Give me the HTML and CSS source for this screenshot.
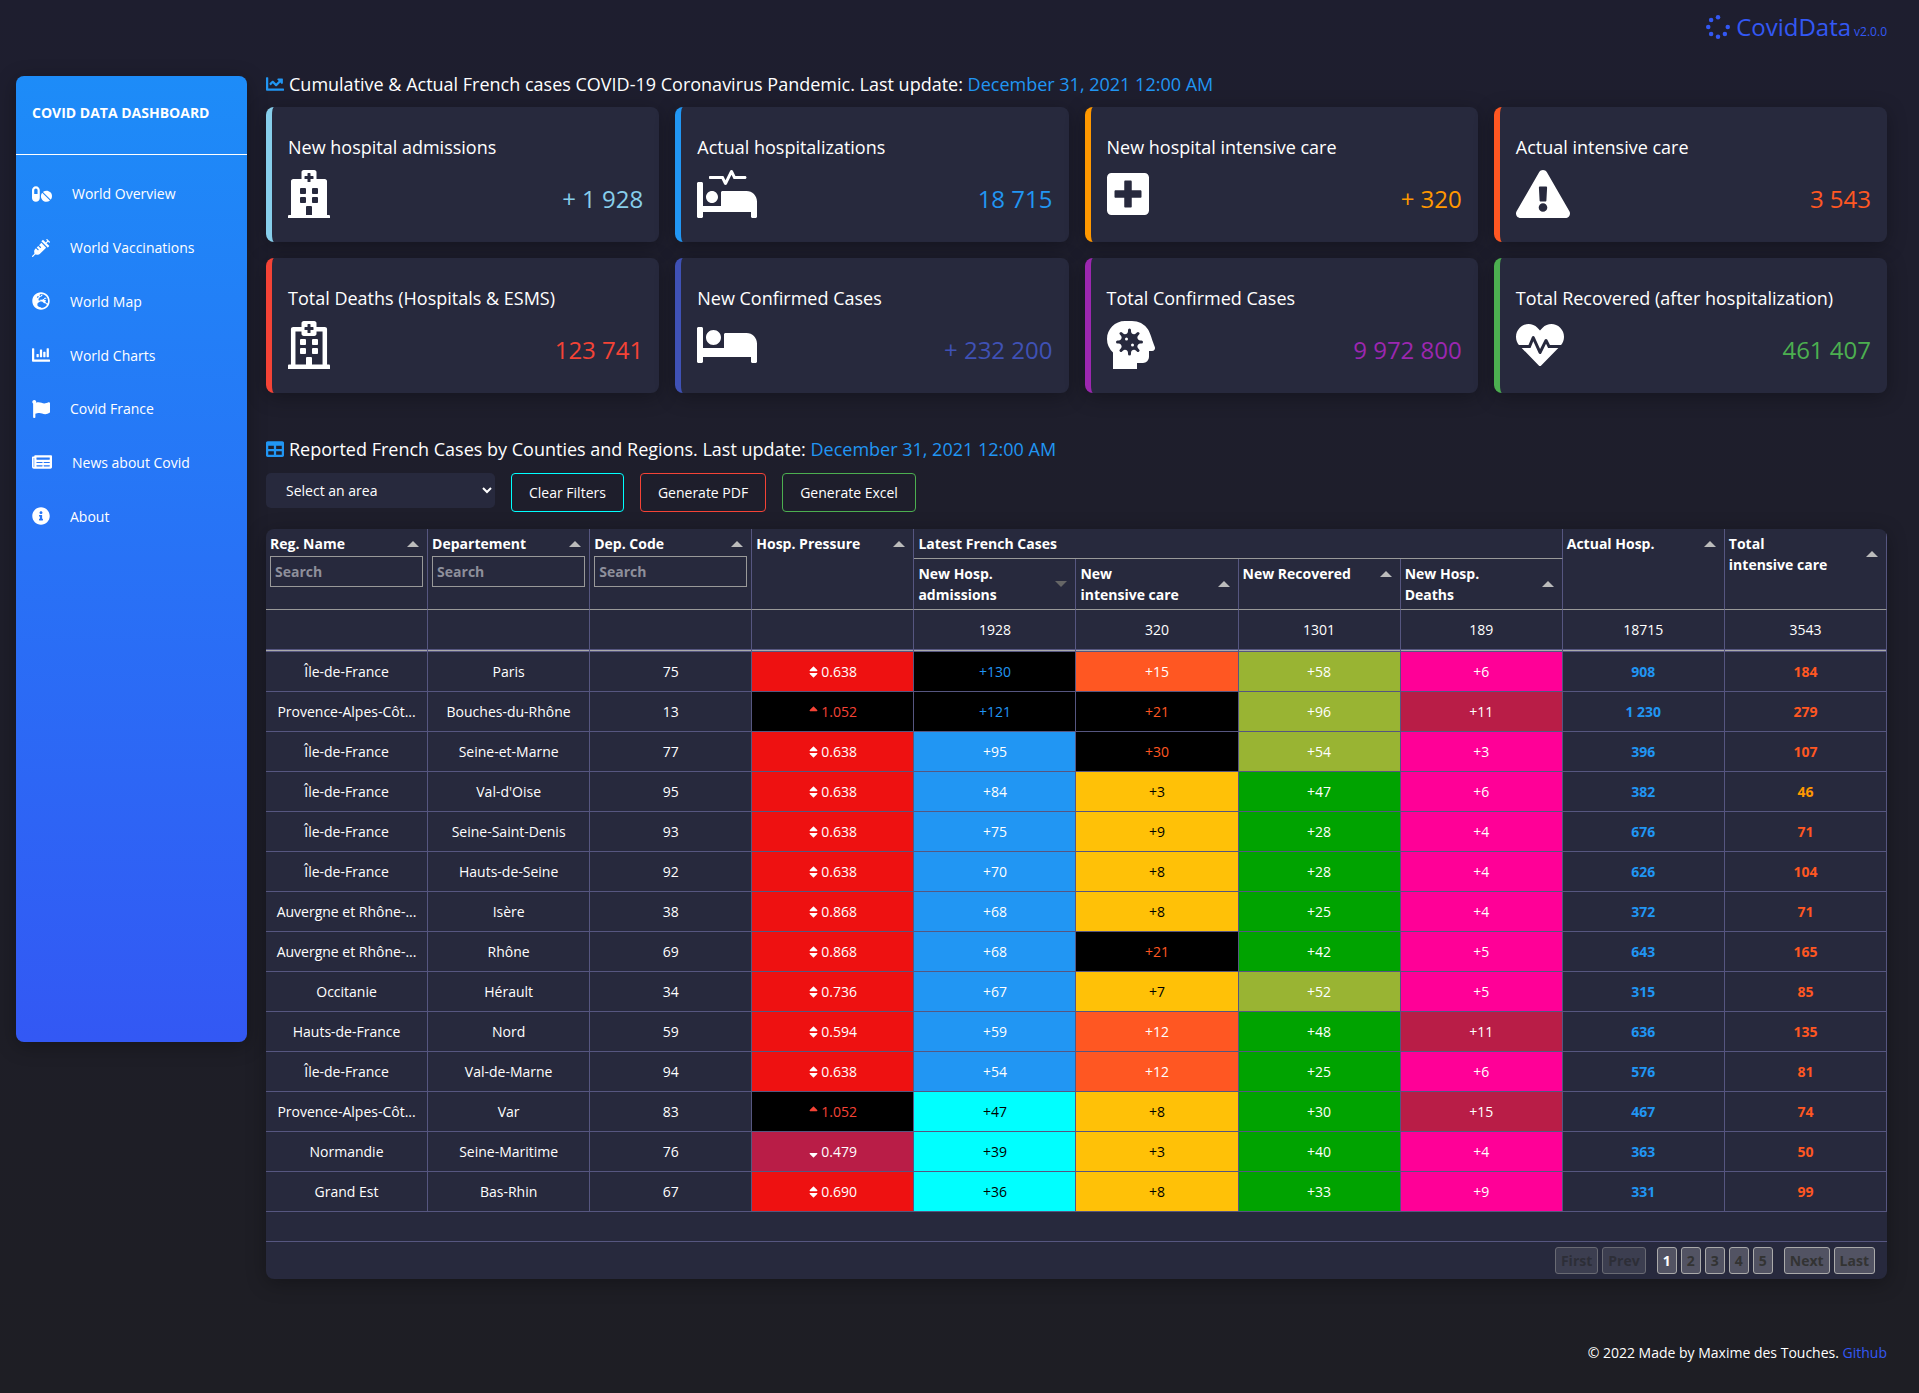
FILE: index.html
```html
<!DOCTYPE html>
<html lang="en">
<head>
<meta charset="utf-8">
<title>CovidData</title>
<meta name="viewport" content="width=device-width, initial-scale=1">
<link rel="stylesheet" href="styles.css">
</head>
<body>
<svg class="sprite" aria-hidden="true">
  <symbol id="sort" viewBox="0 0 320 512"><path d="M41 288h238c21.4 0 32.1 25.9 17 41L177 448c-9.4 9.4-24.6 9.4-33.9 0L24 329c-15.1-15.1-4.4-41 17-41zm255-105L177 64c-9.4-9.4-24.6-9.4-33.9 0L24 183c-15.1 15.1-4.4 41 17 41h238c21.4 0 32.1-25.9 17-41z"/></symbol>
  <symbol id="sort-up" viewBox="0 0 320 512"><path d="M279 224H41c-21.4 0-32.1-25.9-17-41L143 64c9.4-9.4 24.6-9.4 33.9 0l119 119c15.2 15.1 4.5 41-16.9 41z"/></symbol>
  <symbol id="sort-down" viewBox="0 0 320 512"><path d="M41 288h238c21.4 0 32.1 25.9 17 41L177 448c-9.4 9.4-24.6 9.4-33.9 0L24 329c-15.1-15.1-4.4-41 17-41z"/></symbol>
</svg>

<header class="topbar">
  <a class="brand" href="#">
    <svg class="brand-icon" viewBox="0 0 512 512"><circle cx="256" cy="48" r="48"/><circle cx="109" cy="109" r="48"/><circle cx="48" cy="256" r="48"/><circle cx="109" cy="403" r="48"/><circle cx="256" cy="464" r="48"/><circle cx="403" cy="403" r="48"/><circle cx="464" cy="256" r="48"/></svg>
    <span class="brand-name">CovidData</span>
    <span class="brand-version">v2.0.0</span>
  </a>
</header>

<div class="layout">
  <aside class="sidebar">
    <div class="sidebar-title">COVID DATA DASHBOARD</div>
    <nav class="nav">
      <a href="#"><svg class="nav-icon wide" viewBox="0 0 576 512"><path d="M112 32C50.1 32 0 82.1 0 144v224c0 61.9 50.1 112 112 112s112-50.1 112-112V144c0-61.9-50.1-112-112-112zm48 224H64V144c0-26.5 21.5-48 48-48s48 21.5 48 48v112zm139.700-29.700c-3.500-3.500-9.400-3.100-12.300.8-45.300 62.500-40.400 150.100 15.900 206.400 56.300 56.300 143.900 61.200 206.400 15.900 4-2.900 4.300-8.800.8-12.300L299.700 226.300zm229.800-19c-56.300-56.300-143.900-61.200-206.400-15.900-4 2.900-4.300 8.800-.8 12.300l210.800 210.800c3.500 3.500 9.400 3.100 12.300-.8 45.300-62.600 40.500-150.100-15.900-206.400z"/></svg>World Overview</a>
      <a href="#"><svg class="nav-icon" viewBox="0 0 512 512"><path d="M201.500 174.800l55.700 55.800c3.100 3.100 3.100 8.200 0 11.300l-11.300 11.300c-3.100 3.100-8.200 3.100-11.300 0l-55.700-55.800-45.300 45.300 55.800 55.800c3.100 3.100 3.100 8.200 0 11.300l-11.300 11.300c-3.100 3.100-8.200 3.100-11.300 0L111 265.200l-26.400 26.400c-17.300 17.300-25.600 41.100-23 65.400l7.100 63.600L2.300 487c-3.100 3.100-3.100 8.200 0 11.300l11.300 11.300c3.100 3.100 8.200 3.100 11.300 0l66.300-66.300 63.600 7.100c23.900 2.600 47.900-5.400 65.400-23l181.900-181.900-135.700-135.700-64.900 65zm308.200-93.300L430.500 2.300c-3.100-3.100-8.200-3.100-11.300 0l-11.300 11.300c-3.100 3.100-3.100 8.200 0 11.300l28.300 28.300-45.300 45.300-56.600-56.600-17-17c-3.100-3.100-8.200-3.100-11.300 0l-33.900 33.900c-3.100 3.100-3.100 8.200 0 11.300l17 17L424.800 223l17 17c3.100 3.100 8.200 3.100 11.300 0l33.900-34c3.100-3.100 3.100-8.200 0-11.300l-73.500-73.500 45.300-45.300 28.300 28.300c3.100 3.100 8.200 3.100 11.300 0l11.300-11.300c3.100-3.200 3.100-8.200 0-11.400z"/></svg>World Vaccinations</a>
      <a href="#"><svg class="nav-icon" viewBox="0 0 496 512"><path d="M248 8C111 8 0 119 0 256s111 248 248 248 248-111 248-248S385 8 248 8zm200 248c0 22.500-3.900 44.200-10.800 64.400h-20.300c-4.300 0-8.400-1.700-11.400-4.800l-32-32.600c-4.500-4.600-4.500-12.100.1-16.700l12.500-12.500v-8.700c0-3-1.200-5.900-3.300-8l-9.400-9.400c-2.100-2.100-5-3.300-8-3.300h-16c-6.200 0-11.300-5.100-11.300-11.300 0-3 1.200-5.900 3.300-8l9.400-9.400c2.100-2.100 5-3.300 8-3.300h32c6.200 0 11.300-5.100 11.300-11.300v-9.400c0-6.200-5.100-11.300-11.300-11.300h-36.700c-8.800 0-16 7.200-16 16v4.500c0 6.900-4.400 13-10.900 15.200l-31.600 10.500c-3.300 1.100-5.500 4.100-5.500 7.600v2.200c0 4.400-3.600 8-8 8h-16c-4.400 0-8-3.600-8-8s-3.600-8-8-8H247c-3 0-5.800 1.700-7.100 4.400l-9.400 18.700c-2.700 5.400-8.200 8.800-14.300 8.800H194c-8.800 0-16-7.200-16-16V199c0-4.200 1.700-8.300 4.700-11.300l20.100-20.100c4.600-4.600 7.200-10.900 7.200-17.500 0-3.400 2.200-6.500 5.500-7.600l40-13.300c1.700-.6 3.200-1.500 4.400-2.700l26.800-26.800c2.100-2.100 3.300-5 3.300-8 0-6.200-5.100-11.300-11.300-11.300H258l-16 16v8c0 4.400-3.600 8-8 8h-16c-4.400 0-8-3.600-8-8v-20c0-2.500 1.200-4.900 3.200-6.400l28.900-21.700c1.900-.1 3.800-.3 5.700-.3C358.300 56 448 145.700 448 256zM130.100 149.100c0-3 1.200-5.900 3.300-8l25.400-25.400c2.100-2.100 5-3.300 8-3.300 6.200 0 11.300 5.100 11.300 11.300v16c0 3-1.200 5.900-3.300 8l-9.400 9.400c-2.100 2.100-5 3.300-8 3.300h-16c-6.200 0-11.300-5.100-11.300-11.300zm128 306.400v-7.100c0-8.800-7.200-16-16-16h-20.200c-10.800 0-26.700-5.300-35.400-11.800l-22.200-16.700c-11.500-8.600-18.200-22.100-18.200-36.400v-23.900c0-16 8.400-30.800 22.100-39l42.900-25.700c7.100-4.200 15.200-6.500 23.400-6.500h31.200c10.900 0 21.400 3.900 29.600 10.900l43.200 37.100h18.300c8.500 0 16.600 3.400 22.600 9.400l17.300 17.300c3.400 3.400 8.100 5.300 12.900 5.300H423c-32.400 58.900-93.800 99.500-164.900 103.100z"/></svg>World Map</a>
      <a href="#"><svg class="nav-icon" viewBox="0 0 512 512"><path d="M332.800 320h38.400c6.400 0 12.800-6.400 12.800-12.800V172.800c0-6.400-6.400-12.800-12.800-12.800h-38.400c-6.400 0-12.800 6.400-12.800 12.800v134.400c0 6.400 6.400 12.800 12.800 12.800zm96 0h38.400c6.400 0 12.800-6.400 12.800-12.800V76.800c0-6.400-6.400-12.800-12.800-12.800h-38.400c-6.400 0-12.800 6.400-12.800 12.800v230.400c0 6.400 6.400 12.800 12.800 12.800zm-288 0h38.400c6.400 0 12.800-6.400 12.800-12.800v-70.400c0-6.400-6.400-12.800-12.800-12.800h-38.400c-6.400 0-12.800 6.400-12.800 12.800v70.400c0 6.400 6.400 12.800 12.800 12.800zm96 0h38.400c6.400 0 12.800-6.400 12.800-12.800V108.800c0-6.400-6.400-12.800-12.800-12.800h-38.400c-6.400 0-12.800 6.400-12.800 12.800v198.400c0 6.400 6.400 12.800 12.800 12.800zM496 384H64V80c0-8.840-7.160-16-16-16H16C7.160 64 0 71.160 0 80v336c0 17.670 14.330 32 32 32h464c8.840 0 16-7.160 16-16v-32c0-8.840-7.160-16-16-16z"/></svg>World Charts</a>
      <a href="#"><svg class="nav-icon" viewBox="0 0 512 512"><path d="M349.565 98.783C295.978 98.783 251.721 64 184.348 64c-24.955 0-47.309 4.384-68.045 12.013a55.947 55.947 0 0 0 3.586-23.562C118.117 24.015 94.806 1.206 66.338.048 34.345-1.254 8 24.296 8 56c0 19.026 9.497 35.825 24 45.945V488c0 13.255 10.745 24 24 24h16c13.255 0 24-10.745 24-24v-94.400c28.311-12.064 63.582-22.122 114.435-22.122 53.588 0 97.844 34.783 165.217 34.783 48.169 0 86.667-16.294 122.505-40.858C506.840 359.452 512 349.571 512 339.045v-243.100c0-23.393-24.269-38.870-45.485-29.016-34.338 15.948-76.454 31.854-116.950 31.854z"/></svg>Covid France</a>
      <a href="#"><svg class="nav-icon wide" viewBox="0 0 576 512"><path d="M552 64H88c-13.255 0-24 10.745-24 24v8H24c-13.255 0-24 10.745-24 24v272c0 30.928 25.072 56 56 56h472c26.510 0 48-21.490 48-48V88c0-13.255-10.745-24-24-24zM56 400a8 8 0 0 1-8-8V144h16v248a8 8 0 0 1-8 8zm236-16H140c-6.627 0-12-5.373-12-12v-8c0-6.627 5.373-12 12-12h152c6.627 0 12 5.373 12 12v8c0 6.627-5.373 12-12 12zm208 0H348c-6.627 0-12-5.373-12-12v-8c0-6.627 5.373-12 12-12h152c6.627 0 12 5.373 12 12v8c0 6.627-5.373 12-12 12zm-208-96H140c-6.627 0-12-5.373-12-12v-8c0-6.627 5.373-12 12-12h152c6.627 0 12 5.373 12 12v8c0 6.627-5.373 12-12 12zm208 0H348c-6.627 0-12-5.373-12-12v-8c0-6.627 5.373-12 12-12h152c6.627 0 12 5.373 12 12v8c0 6.627-5.373 12-12 12zm0-96H140c-6.627 0-12-5.373-12-12v-40c0-6.627 5.373-12 12-12h360c6.627 0 12 5.373 12 12v40c0 6.627-5.373 12-12 12z"/></svg>News about Covid</a>
      <a href="#"><svg class="nav-icon" viewBox="0 0 512 512"><path d="M256 8C119.043 8 8 119.083 8 256c0 136.997 111.043 248 248 248s248-111.003 248-248C504 119.083 392.957 8 256 8zm0 110c23.196 0 42 18.804 42 42s-18.804 42-42 42-42-18.804-42-42 18.804-42 42-42zm56 254c0 6.627-5.373 12-12 12h-88c-6.627 0-12-5.373-12-12v-24c0-6.627 5.373-12 12-12h12v-64h-12c-6.627 0-12-5.373-12-12v-24c0-6.627 5.373-12 12-12h64c6.627 0 12 5.373 12 12v100h12c6.627 0 12 5.373 12 12v24z"/></svg>About</a>
    </nav>
  </aside>

  <main class="content">
    <h2 class="heading">
      <svg class="heading-icon" viewBox="0 0 512 512"><path d="M496 384H64V80c0-8.840-7.160-16-16-16H16C7.160 64 0 71.160 0 80v336c0 17.670 14.330 32 32 32h464c8.840 0 16-7.160 16-16v-32c0-8.840-7.160-16-16-16zM464 96H345.940c-21.380 0-32.090 25.850-16.970 40.970l32.400 32.400L288 242.750l-73.370-73.370c-12.500-12.500-32.760-12.500-45.250 0l-68.690 68.690c-6.250 6.250-6.250 16.380 0 22.630l22.620 22.620c6.250 6.250 16.380 6.250 22.630 0L192 237.250l73.370 73.370c12.500 12.500 32.760 12.500 45.250 0l96-96 32.400 32.400c15.120 15.120 40.970 4.410 40.970-16.970V112c.01-8.840-7.150-16-15.990-16z"/></svg>
      <span>Cumulative &amp; Actual French cases COVID-19 Coronavirus Pandemic. Last update: <span class="date">December 31, 2021 12:00 AM</span></span>
    </h2>

    <section class="cards">
      <article class="card c-sky">
        <h3>New hospital admissions</h3>
        <div class="card-row">
          <svg viewBox="0 0 448 512"><path d="M448 492v20H0v-20c0-6.627 5.373-12 12-12h20V120c0-13.255 10.745-24 24-24h88V24c0-13.255 10.745-24 24-24h112c13.255 0 24 10.745 24 24v72h88c13.255 0 24 10.745 24 24v360h20c6.627 0 12 5.373 12 12zM308 192h-40c-6.627 0-12 5.373-12 12v40c0 6.627 5.373 12 12 12h40c6.627 0 12-5.373 12-12v-40c0-6.627-5.373-12-12-12zm-168 64h40c6.627 0 12-5.373 12-12v-40c0-6.627-5.373-12-12-12h-40c-6.627 0-12 5.373-12 12v40c0 6.627 5.373 12 12 12zm104 128h-40c-6.627 0-12 5.373-12 12v84h64v-84c0-6.627-5.373-12-12-12zm64-96h-40c-6.627 0-12 5.373-12 12v40c0 6.627 5.373 12 12 12h40c6.627 0 12-5.373 12-12v-40c0-6.627-5.373-12-12-12zm-116 12c0-6.627-5.373-12-12-12h-40c-6.627 0-12 5.373-12 12v40c0 6.627 5.373 12 12 12h40c6.627 0 12-5.373 12-12v-40zM182 96h26v26a6 6 0 0 0 6 6h20a6 6 0 0 0 6-6V96h26a6 6 0 0 0 6-6V70a6 6 0 0 0-6-6h-26V38a6 6 0 0 0-6-6h-20a6 6 0 0 0-6 6v26h-26a6 6 0 0 0-6 6v20a6 6 0 0 0 6 6z"/></svg>
          <span class="value">+ 1&nbsp;928</span>
        </div>
      </article>
      <article class="card c-blue">
        <h3>Actual hospitalizations</h3>
        <div class="card-row">
          <svg viewBox="0 0 640 512"><path d="M528 224H272c-8.800 0-16 7.200-16 16v144H64V144c0-8.800-7.200-16-16-16H16c-8.800 0-16 7.200-16 16v352c0 8.800 7.200 16 16 16h32c8.800 0 16-7.200 16-16v-48h512v48c0 8.800 7.200 16 16 16h32c8.800 0 16-7.200 16-16V336c0-61.900-50.100-112-112-112zM136 96h126.100l27.600 55.200c5.900 11.800 22.700 11.800 28.600 0L368 51.800 390.100 96H512c8.800 0 16-7.200 16-16s-7.200-16-16-16H409.900L382.300 8.800C376.400-3 359.600-3 353.700 8.800L304 108.200l-19.900-39.800c-1.400-2.700-4.100-4.400-7.200-4.400H136c-4.400 0-8 3.600-8 8v16c0 4.400 3.600 8 8 8zm24 256c35.300 0 64-28.700 64-64s-28.700-64-64-64-64 28.700-64 64 28.700 64 64 64z"/></svg>
          <span class="value">18&nbsp;715</span>
        </div>
      </article>
      <article class="card c-orange">
        <h3>New hospital intensive care</h3>
        <div class="card-row">
          <svg viewBox="0 0 448 512"><path d="M400 32H48C21.500 32 0 53.500 0 80v352c0 26.500 21.500 48 48 48h352c26.500 0 48-21.500 48-48V80c0-26.500-21.500-48-48-48zm-32 252c0 6.600-5.400 12-12 12h-92v92c0 6.600-5.400 12-12 12h-56c-6.600 0-12-5.400-12-12v-92H92c-6.600 0-12-5.400-12-12v-56c0-6.600 5.400-12 12-12h92v-92c0-6.600 5.400-12 12-12h56c6.600 0 12 5.400 12 12v92h92c6.600 0 12 5.400 12 12v56z"/></svg>
          <span class="value">+ 320</span>
        </div>
      </article>
      <article class="card c-deep">
        <h3>Actual intensive care</h3>
        <div class="card-row">
          <svg viewBox="0 0 576 512"><path d="M569.517 440.013C587.975 472.007 564.806 512 527.940 512H48.054c-36.937 0-59.999-40.055-41.577-71.987L246.423 23.985c18.467-32.009 64.720-31.951 83.154 0l239.940 416.028zM288 354c-25.405 0-46 20.595-46 46s20.595 46 46 46 46-20.595 46-46-20.595-46-46-46zm-43.673-165.346l7.418 136c.347 6.364 5.609 11.346 11.982 11.346h48.546c6.373 0 11.635-4.982 11.982-11.346l7.418-136c.375-6.874-5.098-12.654-11.982-12.654h-63.383c-6.884 0-12.356 5.780-11.981 12.654z"/></svg>
          <span class="value">3&nbsp;543</span>
        </div>
      </article>
      <article class="card c-red">
        <h3>Total Deaths (Hospitals &amp; ESMS)</h3>
        <div class="card-row">
          <svg viewBox="0 0 448 512"><path d="M128 244v-40c0-6.627 5.373-12 12-12h40c6.627 0 12 5.373 12 12v40c0 6.627-5.373 12-12 12h-40c-6.627 0-12-5.373-12-12zm140 12h40c6.627 0 12-5.373 12-12v-40c0-6.627-5.373-12-12-12h-40c-6.627 0-12 5.373-12 12v40c0 6.627 5.373 12 12 12zm-76 84v-40c0-6.627-5.373-12-12-12h-40c-6.627 0-12 5.373-12 12v40c0 6.627 5.373 12 12 12h40c6.627 0 12-5.373 12-12zm76 12h40c6.627 0 12-5.373 12-12v-40c0-6.627-5.373-12-12-12h-40c-6.627 0-12 5.373-12 12v40c0 6.627 5.373 12 12 12zm180 124v36H0v-36c0-6.627 5.373-12 12-12h19.500V85.035C31.500 73.418 42.245 64 55.500 64H144V24c0-13.255 10.745-24 24-24h112c13.255 0 24 10.745 24 24v40h88.500c13.255 0 24 9.418 24 21.035V464H436c6.627 0 12 5.373 12 12zM79.500 463H192v-67c0-6.627 5.373-12 12-12h40c6.627 0 12 5.373 12 12v67h112.500V112H304v24c0 13.255-10.745 24-24 24H168c-13.255 0-24-10.745-24-24v-24H79.500v351zM266 64h-26V38a6 6 0 0 0-6-6h-20a6 6 0 0 0-6 6v26h-26a6 6 0 0 0-6 6v20a6 6 0 0 0 6 6h26v26a6 6 0 0 0 6 6h20a6 6 0 0 0 6-6V96h26a6 6 0 0 0 6-6V70a6 6 0 0 0-6-6z"/></svg>
          <span class="value">123&nbsp;741</span>
        </div>
      </article>
      <article class="card c-indigo">
        <h3>New Confirmed Cases</h3>
        <div class="card-row">
          <svg viewBox="0 0 640 512"><path d="M176 256c44.110 0 80-35.890 80-80s-35.890-80-80-80-80 35.890-80 80 35.890 80 80 80zm352-128H304c-8.840 0-16 7.160-16 16v144H64V80c0-8.840-7.160-16-16-16H16C7.160 64 0 71.160 0 80v352c0 8.840 7.160 16 16 16h32c8.840 0 16-7.160 16-16v-48h512v48c0 8.840 7.160 16 16 16h32c8.840 0 16-7.160 16-16V240c0-61.860-50.140-112-112-112z"/></svg>
          <span class="value">+ 232&nbsp;200</span>
        </div>
      </article>
      <article class="card c-purple">
        <h3>Total Confirmed Cases</h3>
        <div class="card-row">
          <svg viewBox="0 0 512 512"><path fill-rule="evenodd" d="M509.220 275c-21-47.130-48.500-151.750-73.120-186.750A208.130 208.130 0 0 0 266.110 0H192C86 0 0 86 0 192a191.280 191.280 0 0 0 64 142.820V512h256v-64h64a64 64 0 0 0 64-64v-64h32a32 32 0 0 0 29.220-45zM368 208H355.880c-28.510 0-42.790-34.470-22.630-54.630l8.580-8.570a16 16 0 1 0-22.630-22.630l-8.570 8.580C290.470 150.910 256 136.630 256 108.120V96a16 16 0 0 0-32 0v12.120c0 28.510-34.470 42.790-54.630 22.630l-8.570-8.580a16 16 0 0 0-22.630 22.630l8.580 8.570c20.160 20.160 5.880 54.630-22.630 54.630H112a16 16 0 0 0 0 32h12.120c28.510 0 42.790 34.470 22.630 54.630l-8.580 8.570a16 16 0 1 0 22.630 22.630l8.570-8.580c20.160-20.160 54.630-5.880 54.630 22.630V352a16 16 0 0 0 32 0v-12.120c0-28.510 34.470-42.790 54.630-22.630l8.570 8.580a16 16 0 1 0 22.630-22.630l-8.580-8.570C313.090 274.470 327.370 240 355.880 240H368a16 16 0 0 0 0-32zM208 176a16 16 0 1 1 0 32 16 16 0 0 1 0-32zM272 240a16 16 0 1 1 0 32 16 16 0 0 1 0-32z"/></svg>
          <span class="value">9&nbsp;972&nbsp;800</span>
        </div>
      </article>
      <article class="card c-green">
        <h3>Total Recovered (after hospitalization)</h3>
        <div class="card-row">
          <svg viewBox="0 0 512 512"><path d="M320.200 243.800l-49.700 99.400c-6 12.100-23.400 11.700-28.900-.6l-56.900-126.300-30 71.700H60.600l182.500 186.500c7.100 7.300 18.600 7.300 25.700 0L451.400 288H342.300l-22.100-44.200zM473.700 73.900l-2.400-2.500c-51.500-52.600-135.800-52.600-187.400 0L256 100l-27.900-28.500c-51.500-52.700-135.900-52.700-187.400 0l-2.400 2.400C-10.400 123.700-12.500 203 31 256h102.400l35.900-86.200c5.400-12.900 23.600-13.100 29.400-.4l58.200 129.300 49-97.900c5.900-11.800 22.700-11.800 28.600 0l27.600 55.200H481c43.500-53 41.400-132.300-7.300-182.100z"/></svg>
          <span class="value">461&nbsp;407</span>
        </div>
      </article>
    </section>

    <h2 class="heading">
      <svg class="heading-icon" viewBox="0 0 512 512"><path d="M464 32H48C21.490 32 0 53.490 0 80v352c0 26.510 21.490 48 48 48h416c26.510 0 48-21.490 48-48V80c0-26.510-21.490-48-48-48zM224 416H64v-96h160v96zm0-160H64v-96h160v96zm224 160H288v-96h160v96zm0-160H288v-96h160v96z"/></svg>
      <span>Reported French Cases by Counties and Regions. Last update: <span class="date">December 31, 2021 12:00 AM</span></span>
    </h2>

    <div class="controls">
      <select aria-label="Area"><option>Select an area</option></select>
      <button class="btn btn-clear" type="button">Clear Filters</button>
      <button class="btn btn-pdf" type="button">Generate PDF</button>
      <button class="btn btn-excel" type="button">Generate Excel</button>
    </div>

    <section class="panel">
      <table>
        <thead>
          <tr>
            <th rowspan="2"><div class="th">Reg. Name<i class="up"></i></div><input type="search" placeholder="Search" aria-label="Search region name"></th>
            <th rowspan="2"><div class="th">Departement<i class="up"></i></div><input type="search" placeholder="Search" aria-label="Search departement"></th>
            <th rowspan="2"><div class="th">Dep. Code<i class="up"></i></div><input type="search" placeholder="Search" aria-label="Search departement code"></th>
            <th rowspan="2"><div class="th">Hosp. Pressure<i class="up"></i></div></th>
            <th colspan="4"><div class="th">Latest French Cases</div></th>
            <th rowspan="2"><div class="th">Actual Hosp.<i class="up"></i></div></th>
            <th rowspan="2"><div class="th"><span>Total<br>intensive care</span><i class="up"></i></div></th>
          </tr>
          <tr>
            <th><div class="th"><span>New Hosp.<br>admissions</span><i class="down"></i></div></th>
            <th><div class="th"><span>New<br>intensive care</span><i class="up"></i></div></th>
            <th><div class="th">New Recovered<i class="up"></i></div></th>
            <th><div class="th"><span>New Hosp.<br>Deaths</span><i class="up"></i></div></th>
          </tr>
          <tr class="totals"><td></td><td></td><td></td><td></td><td>1928</td><td>320</td><td>1301</td><td>189</td><td>18715</td><td>3543</td></tr>
        </thead>
        <tbody>
          <tr><td>Île-de-France</td><td>Paris</td><td>75</td><td class="red"><svg class="s"><use href="#sort"/></svg> 0.638</td><td class="black t-blue">+130</td><td class="deep">+15</td><td class="olive">+58</td><td class="pink">+6</td><td class="hosp">908</td><td class="care">184</td></tr>
          <tr><td>Provence-Alpes-Côt...</td><td>Bouches-du-Rhône</td><td>13</td><td class="black t-red"><svg class="s"><use href="#sort-up"/></svg> 1.052</td><td class="black t-blue">+121</td><td class="black t-deep">+21</td><td class="olive">+96</td><td class="ruby">+11</td><td class="hosp">1&nbsp;230</td><td class="care">279</td></tr>
          <tr><td>Île-de-France</td><td>Seine-et-Marne</td><td>77</td><td class="red"><svg class="s"><use href="#sort"/></svg> 0.638</td><td class="blue">+95</td><td class="black t-deep">+30</td><td class="olive">+54</td><td class="pink">+3</td><td class="hosp">396</td><td class="care">107</td></tr>
          <tr><td>Île-de-France</td><td>Val-d'Oise</td><td>95</td><td class="red"><svg class="s"><use href="#sort"/></svg> 0.638</td><td class="blue">+84</td><td class="amber">+3</td><td class="green">+47</td><td class="pink">+6</td><td class="hosp">382</td><td class="care low">46</td></tr>
          <tr><td>Île-de-France</td><td>Seine-Saint-Denis</td><td>93</td><td class="red"><svg class="s"><use href="#sort"/></svg> 0.638</td><td class="blue">+75</td><td class="amber">+9</td><td class="green">+28</td><td class="pink">+4</td><td class="hosp">676</td><td class="care">71</td></tr>
          <tr><td>Île-de-France</td><td>Hauts-de-Seine</td><td>92</td><td class="red"><svg class="s"><use href="#sort"/></svg> 0.638</td><td class="blue">+70</td><td class="amber">+8</td><td class="green">+28</td><td class="pink">+4</td><td class="hosp">626</td><td class="care">104</td></tr>
          <tr><td>Auvergne et Rhône-...</td><td>Isère</td><td>38</td><td class="red"><svg class="s"><use href="#sort"/></svg> 0.868</td><td class="blue">+68</td><td class="amber">+8</td><td class="green">+25</td><td class="pink">+4</td><td class="hosp">372</td><td class="care">71</td></tr>
          <tr><td>Auvergne et Rhône-...</td><td>Rhône</td><td>69</td><td class="red"><svg class="s"><use href="#sort"/></svg> 0.868</td><td class="blue">+68</td><td class="black t-deep">+21</td><td class="green">+42</td><td class="pink">+5</td><td class="hosp">643</td><td class="care">165</td></tr>
          <tr><td>Occitanie</td><td>Hérault</td><td>34</td><td class="red"><svg class="s"><use href="#sort"/></svg> 0.736</td><td class="blue">+67</td><td class="amber">+7</td><td class="olive">+52</td><td class="pink">+5</td><td class="hosp">315</td><td class="care">85</td></tr>
          <tr><td>Hauts-de-France</td><td>Nord</td><td>59</td><td class="red"><svg class="s"><use href="#sort"/></svg> 0.594</td><td class="blue">+59</td><td class="deep">+12</td><td class="green">+48</td><td class="ruby">+11</td><td class="hosp">636</td><td class="care">135</td></tr>
          <tr><td>Île-de-France</td><td>Val-de-Marne</td><td>94</td><td class="red"><svg class="s"><use href="#sort"/></svg> 0.638</td><td class="blue">+54</td><td class="deep">+12</td><td class="green">+25</td><td class="pink">+6</td><td class="hosp">576</td><td class="care">81</td></tr>
          <tr><td>Provence-Alpes-Côt...</td><td>Var</td><td>83</td><td class="black t-red"><svg class="s"><use href="#sort-up"/></svg> 1.052</td><td class="aqua">+47</td><td class="amber">+8</td><td class="green">+30</td><td class="ruby">+15</td><td class="hosp">467</td><td class="care">74</td></tr>
          <tr><td>Normandie</td><td>Seine-Maritime</td><td>76</td><td class="ruby"><svg class="s"><use href="#sort-down"/></svg> 0.479</td><td class="aqua">+39</td><td class="amber">+3</td><td class="green">+40</td><td class="pink">+4</td><td class="hosp">363</td><td class="care">50</td></tr>
          <tr><td>Grand Est</td><td>Bas-Rhin</td><td>67</td><td class="red"><svg class="s"><use href="#sort"/></svg> 0.690</td><td class="aqua">+36</td><td class="amber">+8</td><td class="green">+33</td><td class="pink">+9</td><td class="hosp">331</td><td class="care">99</td></tr>
        </tbody>
      </table>
      <div class="pager">
        <button type="button" disabled>First</button>
        <button type="button" disabled>Prev</button>
        <span class="pages">
          <button type="button" class="active">1</button>
          <button type="button">2</button>
          <button type="button">3</button>
          <button type="button">4</button>
          <button type="button">5</button>
        </span>
        <button type="button">Next</button>
        <button type="button">Last</button>
      </div>
    </section>
  </main>
</div>

<footer class="footer">© 2022 Made by Maxime des Touches. <a href="#">Github</a></footer>
</body>
</html>
```
FILE: styles.css
```css
* {
  box-sizing: border-box;
}

html {
  min-height: 100%;
  background: linear-gradient(#1e1e2f, #1e1e24);
}

body {
  margin: 0;
  color: #fff;
  font: 14px/21px "Open Sans", "Noto Sans", sans-serif;
}

a {
  color: #3358f4;
  text-decoration: none;
}

button,
input,
select {
  font: inherit;
}

svg {
  fill: currentColor;
}

.sprite {
  display: none;
}

/* Top bar */

.topbar {
  display: flex;
  justify-content: flex-end;
  align-items: center;
  height: 54px;
  padding: 0 32px;
}

.brand {
  display: flex;
  align-items: baseline;
}

.brand-icon {
  align-self: center;
  width: 24px;
  height: 24px;
  margin-right: 6px;
}

.brand-name {
  font-size: 24px;
  line-height: 32px;
}

.brand-version {
  margin-left: 3px;
  font-size: 12px;
}

/* Page layout */

.layout {
  display: flex;
  align-items: flex-start;
  gap: 19px;
  padding: 18px 32px 0 16px;
}

.content {
  flex: 1;
  min-width: 0;
}

.sidebar,
.card,
.panel {
  border-radius: 8px;
  box-shadow: 0 4px 20px rgba(0, 0, 0, 0.3);
}

/* Sidebar */

.sidebar {
  flex: none;
  width: 231px;
  min-height: 966px;
  margin-top: 4px;
  background: linear-gradient(#1d8cf8, #3358f4);
}

.sidebar-title {
  padding: 25px 16px 29px;
  border-bottom: 1px solid #fff;
  font-weight: 700;
  line-height: 24px;
}

.nav {
  display: flex;
  flex-direction: column;
  height: 388px;
  padding-top: 12px;
}

.nav a {
  display: flex;
  flex: 1;
  align-items: center;
  gap: 20px;
  padding: 0 16px;
  color: #fff;
}

.nav-icon {
  flex: none;
  width: 18px;
  height: 18px;
}

.nav-icon.wide {
  width: 20px;
}

/* Headings */

.heading {
  display: flex;
  align-items: center;
  gap: 5px;
  margin: 0 0 11px;
  font-size: 18px;
  font-weight: 400;
  line-height: 24px;
}

.heading-icon {
  width: 18px;
  height: 18px;
  color: #2196f3;
}

.date {
  color: #2196f3;
}

/* Figure cards */

.cards {
  display: grid;
  grid-template-columns: repeat(4, 1fr);
  gap: 16px;
  margin-bottom: 44px;
}

.card {
  padding: 24px 16px;
  border-left: 6px solid;
  background: #27293d;
}

.card h3 {
  margin: 0 0 7px;
  color: #fff;
  font-size: 18px;
  font-weight: 400;
  line-height: 32px;
}

.card-row {
  display: flex;
  justify-content: space-between;
  align-items: flex-end;
}

.card-row svg {
  height: 48px;
  fill: #fff;
}

.value {
  font-size: 24px;
  line-height: 38px;
}

.c-sky { color: #87ceeb; }
.c-blue { color: #2196f3; }
.c-orange { color: #ff9800; }
.c-deep { color: #ff5722; }
.c-red { color: #f44336; }
.c-indigo { color: #3f51b5; }
.c-purple { color: #9c27b0; }
.c-green { color: #4caf50; }

/* Table controls */

.controls {
  display: flex;
  align-items: flex-start;
  gap: 16px;
  margin: 12px 0 17px;
}

.controls select {
  width: 229px;
  height: 35px;
  padding: 0 0 0 16px;
  border: 0;
  border-radius: 5px;
  background: #27293d;
  color: #fff;
}

.btn {
  height: 39px;
  padding: 0 17px;
  border: 1px solid;
  border-radius: 4px;
  background: transparent;
  color: #fff;
}

.btn-clear { border-color: #0ff; }
.btn-pdf { border-color: #f44336; }
.btn-excel { border-color: #4caf50; }

/* Table */

.panel {
  overflow: hidden;
  background: #27293d;
}

table {
  width: 100%;
  border-collapse: separate;
  border-spacing: 0;
  table-layout: fixed;
}

th {
  padding: 4px;
  border-right: 1px solid #565680;
  border-bottom: 1px solid #999;
  font-weight: 700;
  text-align: left;
  vertical-align: top;
}

.th {
  display: flex;
  justify-content: space-between;
  align-items: center;
  padding-right: 4px;
}

.th i {
  border: 6px solid transparent;
}

.th .up {
  border-top: 0;
  border-bottom-color: #bbb;
}

.th .down {
  border-bottom: 0;
  border-top-color: #666;
}

th input {
  display: block;
  width: 100%;
  height: 31px;
  margin-top: 2px;
  padding: 4px;
  border: 1px solid #999;
  border-radius: 0;
  background: transparent;
  color: #fff;
}

th input::placeholder {
  color: #8e8f9b;
}

td {
  height: 40px;
  padding: 4px;
  border-right: 1px solid #565680;
  border-bottom: 1px solid #565680;
  text-align: center;
  white-space: nowrap;
}

.totals td {
  height: 42px;
  padding-bottom: 6px;
  box-shadow: inset 0 -1px #aaa, inset 0 -2px #565680;
}

.s {
  width: 9px;
  height: 14px;
  vertical-align: -2px;
}

.red { background: #e11; }
.black { background: #000; }
.blue { background: #2196f3; }
.deep { background: #ff5722; }
.olive { background: #99b433; }
.green { background: #00a300; }
.pink { background: #ff0097; }
.ruby { background: #b91d47; }
.amber { background: #ffc107; color: #000; }
.aqua { background: #0ff; color: #000; }
.t-blue { color: #2196f3; }
.t-red { color: #f44336; }
.t-deep { color: #ff5722; }

.hosp,
.care {
  font-weight: 700;
}

.hosp { color: #2196f3; }
.care { color: #ff5722; }
.care.low { color: #ff9800; }

/* Pagination */

.pager {
  display: flex;
  justify-content: flex-end;
  gap: 4px;
  margin-top: 29px;
  padding: 5px 12px;
  border-top: 1px solid #565680;
}

.pages {
  display: flex;
  gap: 4px;
  margin: 0 7px;
}

.pager button {
  height: 27px;
  padding: 0 5px;
  border: 1px solid #aaa;
  border-radius: 3px;
  background: rgba(255, 255, 255, 0.2);
  color: #333;
  font-weight: 700;
}

.pager button.active {
  color: #fff;
}

.pager button:disabled {
  opacity: 0.5;
}

/* Footer */

.footer {
  padding: 63px 32px 29px;
  text-align: right;
}
```
